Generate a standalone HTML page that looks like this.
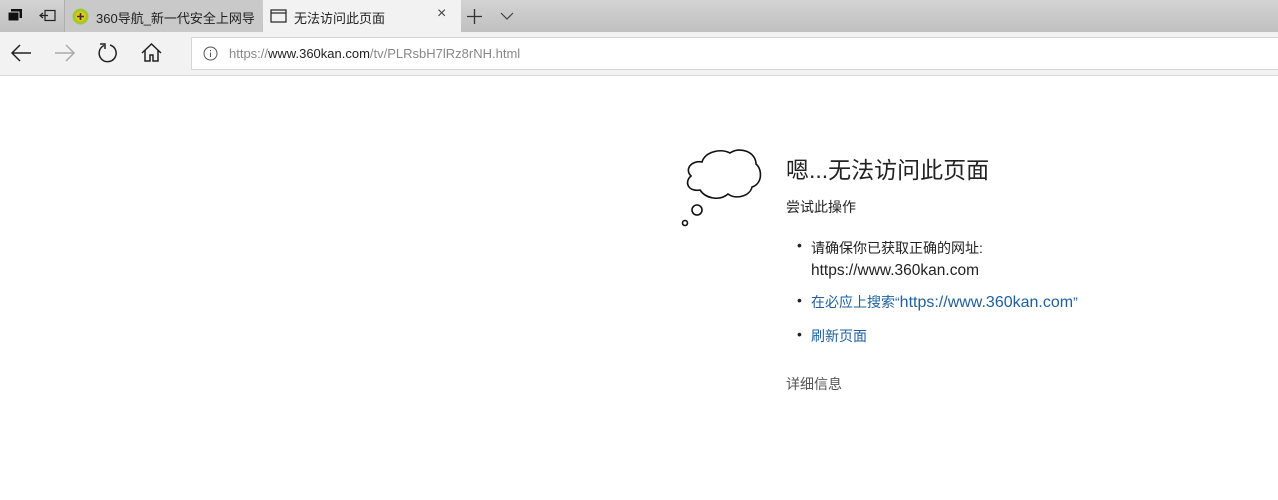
<!DOCTYPE html>
<html><head><meta charset="utf-8"><style>
*{margin:0;padding:0;box-sizing:border-box}
body{width:1278px;height:500px;overflow:hidden;background:#fff;font-family:"Liberation Sans","Noto Sans CJK SC",sans-serif;position:relative}
.tabs{position:absolute;left:0;top:0;width:1278px;height:32px;background:linear-gradient(#d3d3d3,#c0c0c0)}
.tab1{position:absolute;left:64px;top:0;width:198px;height:32px;border-left:1px solid #b0b0b0;background:#c9c9c9;overflow:hidden}
.tab2{position:absolute;left:263px;top:0;width:198px;height:32px;background:#f2f2f2}
.t{position:absolute;font-size:13px;color:#222;top:8px;white-space:nowrap}
.bar{position:absolute;left:0;top:32px;width:1278px;height:44px;background:#f2f2f2;border-bottom:1px solid #dadada}
.addr{position:absolute;left:191px;top:37px;width:1087px;height:33px;background:#fff;border:1px solid #d6d6d6;border-right:none}
.url{position:absolute;left:229px;top:46px;font-size:13px;color:#888}
.url b{font-weight:normal;color:#222}
.c{position:absolute;white-space:nowrap}
</style></head><body>
<div class="tabs"></div>
<svg class="c" style="left:8px;top:9px" width="16" height="14"><rect x="3" y="0" width="11" height="9" fill="#111"/><rect x="0" y="3" width="11" height="9" fill="#111" stroke="#d0d0d0" stroke-width="1"/></svg>
<svg class="c" style="left:39px;top:9px" width="18" height="14" fill="none" stroke="#222" stroke-width="1.2"><rect x="6" y="1.5" width="10" height="10"/><path d="M1 6.5h8M4 4l-3 2.5 3 2.5"/></svg>
<div class="tab1"><div class="t" style="left:31px;width:158px;overflow:hidden">360导航_新一代安全上网导航</div></div>
<svg class="c" style="left:72px;top:8px" width="17" height="17"><circle cx="8.5" cy="8.5" r="8" fill="#9ccc2a"/><circle cx="8.5" cy="8.5" r="5" fill="#f3c11c"/><path d="M8.5 5v7M5 8.5h7" stroke="#333" stroke-width="1.6"/></svg>
<div class="tab2"></div>
<svg class="c" style="left:270px;top:9px" width="17" height="14" fill="none" stroke="#222" stroke-width="1.2"><rect x="1" y="1" width="15" height="12"/><path d="M1 4h15"/></svg>
<div class="t" style="left:294px">无法访问此页面</div>
<div class="t" style="left:437px;font-size:16px;top:5px;color:#444">×</div>
<svg class="c" style="left:467px;top:9px" width="15" height="15" stroke="#333" stroke-width="1.3"><path d="M7.5 0v15M0 7.5h15"/></svg>
<svg class="c" style="left:500px;top:12px" width="14" height="8" fill="none" stroke="#444" stroke-width="1.2"><path d="M1 1l6 6 6-6"/></svg>
<div class="bar"></div>
<svg class="c" style="left:10px;top:44px" width="22" height="18" fill="none" stroke="#222" stroke-width="1.5"><path d="M21 9H2M10 1L2 9l8 8"/></svg>
<svg class="c" style="left:54px;top:44px" width="22" height="18" fill="none" stroke="#aaa" stroke-width="1.5"><path d="M1 9h19M12 1l8 8-8 8"/></svg>
<svg class="c" style="left:97px;top:42px" width="22" height="22" fill="none" stroke="#222" stroke-width="1.5"><path d="M7 3.5A8.5 8.5 0 1 0 13 3"/><path d="M3 2h5v5"/></svg>
<svg class="c" style="left:141px;top:43px" width="21" height="20" fill="none" stroke="#222" stroke-width="1.5"><path d="M1 10L10.5 1 20 10M4 7.5V18h5v-6h3v6h5V7.5"/></svg>
<div class="addr"></div>
<svg class="c" style="left:203px;top:46px" width="15" height="15" fill="none" stroke="#555" stroke-width="1"><circle cx="7.5" cy="7.5" r="6.5"/><path d="M7.5 6.5v4.5M7.5 4v1.2"/></svg>
<div class="url">https://<b>www.360kan.com</b>/tv/PLRsbH7lRz8rNH.html</div>
<svg class="c" style="left:678px;top:146px" width="86" height="82" fill="none" stroke="#111" stroke-width="1.6"><path d="M22 44C10 46 6 36 13 30 6 23 14 14 24 16 27 6 42 2 52 7 62 0 78 6 78 18 85 24 84 38 74 41 72 50 58 54 50 48 42 55 28 53 22 44z"/><circle cx="19" cy="64" r="5"/><circle cx="7" cy="77" r="2.5"/></svg>
<div class="c" style="left:786px;top:151px;font-size:23px;color:#222">嗯...无法访问此页面</div>
<div class="c" style="left:786px;top:197px;font-size:14px;color:#222">尝试此操作</div>
<div class="c" style="left:797px;top:237px;font-size:14px;color:#222">•</div>
<div class="c" style="left:811px;top:237px;font-size:14px;color:#222;line-height:22px">请确保你已获取正确的网址:<br><span style="font-size:15.5px">https://www.360kan.com</span></div>
<div class="c" style="left:797px;top:292px;font-size:14px;color:#222">•</div>
<div class="c" style="left:811px;top:292px;font-size:14px;color:#1f5f9f">在必应上搜索“<span style="font-size:16px">https://www.360kan.com</span>”</div>
<div class="c" style="left:797px;top:326px;font-size:14px;color:#222">•</div>
<div class="c" style="left:811px;top:326px;font-size:14px;color:#1f5f9f">刷新页面</div>
<div class="c" style="left:786px;top:374px;font-size:14px;color:#555">详细信息</div>
</body></html>
